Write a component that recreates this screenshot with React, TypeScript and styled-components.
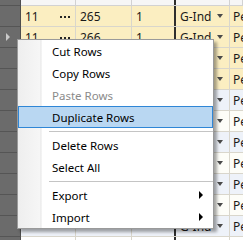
import styled, { createGlobalStyle } from 'styled-components';

const GlobalStyle = createGlobalStyle`
  html, body {
    margin: 0;
    padding: 0;
    background: #ffffff;
    overflow: hidden;
  }
  body {
    font-family: 'Segoe UI', 'Noto Sans', 'Liberation Sans', sans-serif;
    font-size: 12px;
  }
`;

type RowTone = 'selected' | 'plain' | 'alt' | 'empty';

const rows: { tone: RowTone; a: string; b: string; c: string; d: string; e: string; current?: boolean }[] = [
  { tone: 'selected', a: '11', b: '265', c: '1', d: 'G-Ind', e: 'Pe' },
  { tone: 'selected', a: '11', b: '266', c: '1', d: 'G-Ind', e: 'Pe', current: true },
  { tone: 'selected', a: '11', b: '267', c: '1', d: 'G-Ind', e: 'Pe' },
  { tone: 'selected', a: '11', b: '268', c: '1', d: 'G-Ind', e: 'Pe' },
  { tone: 'alt', a: '11', b: '269', c: '1', d: 'G-Ind', e: 'Pe' },
  { tone: 'plain', a: '11', b: '270', c: '1', d: 'G-Ind', e: 'Pe' },
  { tone: 'alt', a: '11', b: '271', c: '1', d: 'G-Ind', e: 'Pe' },
  { tone: 'plain', a: '11', b: '272', c: '1', d: 'G-Ind', e: 'Pe' },
  { tone: 'alt', a: '11', b: '273', c: '1', d: 'G-Ind', e: 'Pe' },
  { tone: 'plain', a: '11', b: '274', c: '1', d: 'G-Ind', e: 'Pe' },
  { tone: 'alt', a: '', b: '', c: '', d: 'G-Ind', e: 'Pe' },
  { tone: 'empty', a: '', b: '', c: '', d: '', e: '' },
];

const toneColor: Record<RowTone, string> = {
  selected: '#fbeec1',
  plain: '#fdfdf8',
  alt: '#eef2f9',
  empty: '#ffffff',
};

const menuItems: { kind: 'item' | 'sep'; label?: string; disabled?: boolean; active?: boolean; sub?: boolean }[] = [
  { kind: 'item', label: 'Cut Rows' },
  { kind: 'item', label: 'Copy Rows' },
  { kind: 'item', label: 'Paste Rows', disabled: true },
  { kind: 'item', label: 'Duplicate Rows', active: true },
  { kind: 'sep' },
  { kind: 'item', label: 'Delete Rows' },
  { kind: 'item', label: 'Select All' },
  { kind: 'sep' },
  { kind: 'item', label: 'Export', sub: true },
  { kind: 'item', label: 'Import', sub: true },
];

const App = () => {
  return (
    <>
      <GlobalStyle />
      <Page>
        <Grid>
          <HeaderRow>
            <RowHead />
            <HeadCell $w="55px" />
            <HeadCell $w="56px" />
            <HeadCell $w="44px" $thick />
            <HeadCell $w="54px" />
            <HeadCell $w="auto" $grow />
          </HeaderRow>
          {rows.map((r, i) => (
            <Row key={i} $bg={toneColor[r.tone]}>
              <RowHead>{r.current && <CurrentMark />}</RowHead>
              <Cell $w="55px">
                <span>{r.a}</span>
                {r.a && <Dots />}
              </Cell>
              <Cell $w="56px">{r.b}</Cell>
              <Cell $w="44px" $thick>
                {r.c}
              </Cell>
              <Cell $w="54px">
                <span>{r.d}</span>
                {r.d && <DropArrow />}
              </Cell>
              <LastCell>{r.e}</LastCell>
            </Row>
          ))}
        </Grid>

        <Menu>
          {menuItems.map((m, i) =>
            m.kind === 'sep' ? (
              <Separator key={i} />
            ) : (
              <MenuItem key={i} $active={!!m.active} $disabled={!!m.disabled}>
                <span>{m.label}</span>
                {m.sub && <SubArrow />}
              </MenuItem>
            )
          )}
        </Menu>
      </Page>
    </>
  );
};

const Page = styled.div`
  position: relative;
  width: 243px;
  height: 240px;
  overflow: hidden;
  background: #ffffff;
`;
const Grid = styled.div`
  display: flex;
  flex-direction: column;
`;
const HeaderRow = styled.div`
  display: flex;
  height: 6px;
  background: #f6f6f6;
  border-bottom: 1px solid #d2d2d2;
  box-sizing: border-box;
`;
const Row = styled.div<{ $bg: string }>`
  display: flex;
  height: 21px;
  box-sizing: border-box;
  border-bottom: 1px solid #d9d6cc;
  background: ${(props) => props.$bg};
`;
const RowHead = styled.div`
  width: 21px;
  flex: none;
  box-sizing: border-box;
  background: #6b6b6b;
  border-right: 1px solid #4e4e4e;
  border-bottom: 1px solid #555555;
  margin-bottom: -1px;
  display: flex;
  align-items: center;
  padding-left: 6px;
`;
const CurrentMark = styled.div`
  width: 0;
  height: 0;
  border-top: 4px solid transparent;
  border-bottom: 4px solid transparent;
  border-left: 4px solid #c9c9c9;
`;
const HeadCell = styled.div<{ $w: string; $thick?: boolean; $grow?: boolean }>`
  width: ${(props) => props.$w};
  flex: ${(props) => (props.$grow ? '1' : 'none')};
  box-sizing: border-box;
  border-right: ${(props) => (props.$thick ? '2px solid #2e2e2e' : '1px solid #d2d2d2')};
`;
const Cell = styled.div<{ $w: string; $thick?: boolean }>`
  width: ${(props) => props.$w};
  flex: none;
  box-sizing: border-box;
  border-right: ${(props) => (props.$thick ? '2px solid #2e2e2e' : '1px solid #d9d6cc')};
  padding: 0 5px 0 4px;
  display: flex;
  align-items: center;
  justify-content: space-between;
  color: #1a1a1a;
  white-space: nowrap;
  overflow: hidden;
  font-size: 12px;
`;
const LastCell = styled.div`
  flex: 1;
  padding-left: 3px;
  display: flex;
  align-items: center;
  color: #1a1a1a;
  white-space: nowrap;
  font-size: 12px;
`;
const Dots = styled.span`
  width: 10px;
  height: 2px;
  margin-top: 1px;
  background: repeating-linear-gradient(to right, #262626 0 2px, transparent 2px 4px);
`;
const DropArrow = styled.span`
  width: 0;
  height: 0;
  border-left: 3px solid transparent;
  border-right: 3px solid transparent;
  border-top: 4px solid #4a4a4a;
  margin-right: 1px;
`;
const Menu = styled.div`
  position: absolute;
  left: 17px;
  top: 39px;
  width: 197px;
  box-sizing: border-box;
  border: 1px solid #9a9a9a;
  background: linear-gradient(
    to right,
    #eeeeee 0,
    #f6f6f6 22px,
    #e6e6e6 23px,
    #ffffff 24px,
    #ffffff 100%
  );
  box-shadow: 3px 3px 3px rgba(0, 0, 0, 0.35);
  display: flex;
  flex-direction: column;
`;
const MenuItem = styled.div<{ $active: boolean; $disabled: boolean }>`
  height: 22px;
  box-sizing: border-box;
  display: flex;
  align-items: center;
  justify-content: space-between;
  padding: 0 9px 0 33px;
  border: 1px solid ${(props) => (props.$active ? '#2f86d6' : 'transparent')};
  background: ${(props) => (props.$active ? '#b9d7f2' : 'transparent')};
  color: ${(props) => (props.$disabled ? '#8a8a8a' : '#000000')};
  font-size: 11.5px;
`;
const SubArrow = styled.span`
  width: 0;
  height: 0;
  border-top: 4px solid transparent;
  border-bottom: 4px solid transparent;
  border-left: 4px solid #000000;
`;
const Separator = styled.div`
  height: 6px;
  display: flex;
  align-items: center;
  padding-left: 31px;
  &::after {
    content: '';
    flex: 1;
    height: 1px;
    background: #c4c4c4;
  }
`;

export default App;
